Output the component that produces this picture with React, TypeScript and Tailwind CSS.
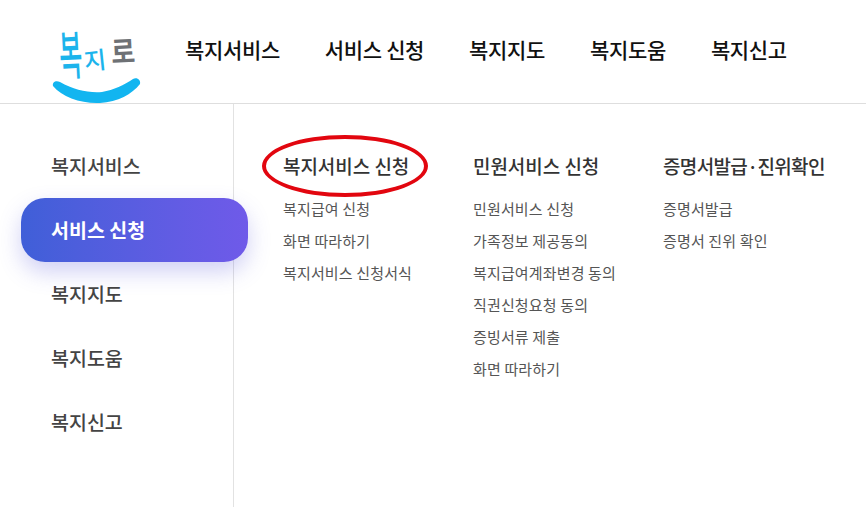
const topMenu = ["복지서비스", "서비스 신청", "복지지도", "복지도움", "복지신고"];
const sideMenu = ["복지서비스", "서비스 신청", "복지지도", "복지도움", "복지신고"];

const columns = [
  { title: "복지서비스 신청", width: "w-[190px]", items: ["복지급여 신청", "화면 따라하기", "복지서비스 신청서식"] },
  {
    title: "민원서비스 신청",
    width: "w-[190px]",
    items: ["민원서비스 신청", "가족정보 제공동의", "복지급여계좌변경 동의", "직권신청요청 동의", "증빙서류 제출", "화면 따라하기"],
  },
  { title: "증명서발급·진위확인", width: "w-[170px]", items: ["증명서발급", "증명서 진위 확인"] },
];

function Logo() {
  return (
    <div className="relative w-[90px] h-[82px]">
      <div className="flex items-start pl-[7px] leading-none">
        <span className="mt-[19px] w-[24px] text-[25px] leading-[25px] font-medium text-[#1cb4ec] origin-center scale-y-[2.1] -rotate-3">복</span>
        <span className="mt-[26px] ml-[1px] w-[24px] text-[24px] leading-[24px] font-medium text-[#1cb4ec] origin-center -rotate-6">지</span>
        <span className="mt-[16px] ml-[3px] w-[26px] text-[26px] leading-[26px] font-bold text-[#6e7175] origin-center scale-y-[1.15] -rotate-3">로</span>
      </div>
      {/* smile */}
      <svg className="absolute left-0 top-[54px]" width="90" height="30" viewBox="0 0 90 30" fill="none">
        <path
          d="M1 11C0 7 4 5 8 7C22 15 36 18 50 17C62 15 72 10 81 4C85 2 89 5 88 9C80 19 66 27 48 28C30 29 10 22 1 11Z"
          fill="#12b5f0"
        />
      </svg>
    </div>
  );
}

export default function App() {
  return (
    <div className="w-[866px] h-[507px] bg-white overflow-hidden" style={{ fontFamily: '"Noto Sans CJK KR", sans-serif' }}>
      {/* Header */}
      <div className="h-[104px] border-b border-[#dedede] flex items-start">
        <div className="ml-[52px] mt-[21px] w-[133px] shrink-0">
          <Logo />
        </div>
        <div className="flex gap-[45px] mt-[34px]">
          {topMenu.map((m) => (
            <span key={m} className="text-[21px] leading-[30px] font-medium text-[#111] tracking-[-0.35px]">
              {m}
            </span>
          ))}
        </div>
      </div>

      <div className="flex h-[403px]">
        {/* Sidebar */}
        <div className="w-[234px] shrink-0 border-r border-[#e2e2e2] pt-[30px] pl-[21px]">
          <div className="flex flex-col">
            {sideMenu.map((m, i) => (
              <div
                key={m}
                className={
                  i === 1
                    ? "w-[227px] h-[64px] pl-[30px] flex items-center rounded-[24px] bg-gradient-to-r from-[#3f5fd8] to-[#6f5ae9] text-white font-bold shadow-[0_10px_22px_rgba(90,90,220,0.28)] text-[19.5px]"
                    : "h-[64px] pl-[30px] flex items-center text-[19.5px] font-medium text-[#444]"
                }
              >
                {m}
              </div>
            ))}
          </div>
        </div>

        {/* Sub menu */}
        <div className="flex pl-[49px] pt-[48px]">
          {columns.map((c, i) => (
            <div key={c.title} className={c.width}>
              <div
                className={
                  i === 2
                    ? "text-[19px] leading-[28px] font-medium text-[#333] whitespace-nowrap tracking-[-0.65px]"
                    : "relative text-[19px] leading-[28px] font-medium text-[#333] whitespace-nowrap tracking-[-0.05px]"
                }
              >
                {c.title}
                {i === 0 && (
                  <span className="absolute left-[-21px] top-[-17px] w-[166px] h-[62px] rounded-[50%] border-[4px] border-[#e2060f]" />
                )}
              </div>
              <div className="mt-[18px] flex flex-col gap-[10px]">
                {c.items.map((it) => (
                  <div key={it} className="text-[15px] leading-[22px] text-[#555] whitespace-nowrap tracking-[0.15px]">
                    {it}
                  </div>
                ))}
              </div>
            </div>
          ))}
        </div>
      </div>
    </div>
  );
}
